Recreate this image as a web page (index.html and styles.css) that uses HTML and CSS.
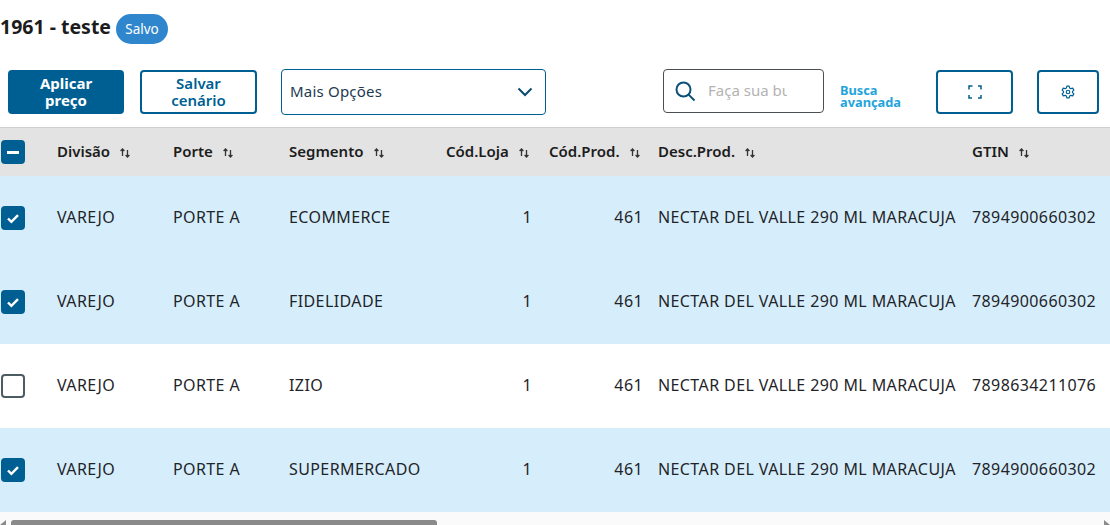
FILE: index.html
```html
<!DOCTYPE html>
<html lang="pt-BR">
<head>
<meta charset="utf-8">
<title>1961 - teste</title>
<link rel="stylesheet" href="styles.css">
</head>
<body>
<svg class="defs" width="0" height="0">
  <symbol id="sort" viewBox="0 0 12 12">
    <path d="M3.500 9V2.200M1.600 4 3.500 2l1.900 2" fill="none" stroke="currentColor" stroke-width="1.300"/>
    <path d="M8.500 3v6.800M6.600 8l1.900 2 1.900-2" fill="none" stroke="currentColor" stroke-width="1.300"/>
  </symbol>
  <symbol id="check" viewBox="0 0 24 24">
    <path d="M7 12.500l3.400 3.400L17 9.200" fill="none" stroke="#fff" stroke-width="2.400"/>
  </symbol>
</svg>
<header class="title-row">
  <h1 class="title">1961 - teste</h1>
  <span class="badge">Salvo</span>
</header>
<section class="toolbar">
  <button class="btn btn-primary">Aplicar<br>preço</button>
  <button class="btn btn-outline btn-save">Salvar<br>cenário</button>
  <div class="select">
    <span>Mais Opções</span>
    <svg width="16" height="10" viewBox="0 0 16 10"><path d="M1.500 1.500 8 8l6.500-6.500" fill="none" stroke="#0c4a6e" stroke-width="2"/></svg>
  </div>
  <div class="search">
    <svg width="22" height="22" viewBox="0 0 22 22"><circle cx="9.500" cy="9.500" r="7" fill="none" stroke="#0c4f78" stroke-width="2"/><path d="M14.600 14.600 20.500 20.500" stroke="#0c4f78" stroke-width="2"/></svg>
    <span class="placeholder">Faça sua busca</span>
  </div>
  <a class="advanced">Busca<br>avançada</a>
  <button class="btn btn-outline btn-icon btn-full">
    <svg width="14" height="14" viewBox="0 0 14 14"><path d="M1 4.500V1h3.500M10 1h3v3.500M13 10v3h-3M4 13H1v-3" fill="none" stroke="#005f92" stroke-width="1.500"/></svg>
  </button>
  <button class="btn btn-outline btn-icon btn-gear">
    <svg width="14" height="14" viewBox="0 0 24 24"><path d="M10 2h4l.7 3 2.300 1.300 3-.9 2 3.400-2.300 2.200v2l2.300 2.200-2 3.400-3-.9-2.300 1.300-.7 3h-4l-.7-3L7 17.700l-3 .9-2-3.400L4.300 13v-2L2 8.800l2-3.400 3 .9L9.300 5z" fill="none" stroke="#005f92" stroke-width="2" stroke-linejoin="round"/><circle cx="12" cy="12" r="3" fill="none" stroke="#005f92" stroke-width="2"/></svg>
  </button>
</section>
<main class="table-wrap">
  <table class="grid">
    <colgroup>
      <col class="c-check"><col class="c-short"><col class="c-short"><col class="c-seg"><col class="c-loja"><col class="c-prod"><col class="c-desc"><col class="c-gtin">
    </colgroup>
    <thead>
      <tr>
        <th class="cell-check"><span class="box box-on"><i class="dash"></i></span></th>
        <th>Divisão<svg class="sort"><use href="#sort"/></svg></th>
        <th>Porte<svg class="sort"><use href="#sort"/></svg></th>
        <th>Segmento<svg class="sort"><use href="#sort"/></svg></th>
        <th>Cód.Loja<svg class="sort"><use href="#sort"/></svg></th>
        <th>Cód.Prod.<svg class="sort"><use href="#sort"/></svg></th>
        <th>Desc.Prod.<svg class="sort"><use href="#sort"/></svg></th>
        <th>GTIN<svg class="sort"><use href="#sort"/></svg></th>
      </tr>
    </thead>
    <tbody>
      <tr class="selected">
        <td class="cell-check"><span class="box box-on"><svg width="24" height="24"><use href="#check"/></svg></span></td>
        <td>VAREJO</td><td>PORTE A</td><td>ECOMMERCE</td><td class="num loja">1</td><td class="num">461</td><td>NECTAR DEL VALLE 290 ML MARACUJA</td><td>7894900660302</td>
      </tr>
      <tr class="selected">
        <td class="cell-check"><span class="box box-on"><svg width="24" height="24"><use href="#check"/></svg></span></td>
        <td>VAREJO</td><td>PORTE A</td><td>FIDELIDADE</td><td class="num loja">1</td><td class="num">461</td><td>NECTAR DEL VALLE 290 ML MARACUJA</td><td>7894900660302</td>
      </tr>
      <tr>
        <td class="cell-check"><span class="box"></span></td>
        <td>VAREJO</td><td>PORTE A</td><td>IZIO</td><td class="num loja">1</td><td class="num">461</td><td>NECTAR DEL VALLE 290 ML MARACUJA</td><td>7898634211076</td>
      </tr>
      <tr class="selected">
        <td class="cell-check"><span class="box box-on"><svg width="24" height="24"><use href="#check"/></svg></span></td>
        <td>VAREJO</td><td>PORTE A</td><td>SUPERMERCADO</td><td class="num loja">1</td><td class="num">461</td><td>NECTAR DEL VALLE 290 ML MARACUJA</td><td>7894900660302</td>
      </tr>
    </tbody>
  </table>
</main>
<div class="scrollbar"><span class="arrow-left"></span><span class="thumb"></span><span class="arrow-right"></span></div>
</body>
</html>
```

FILE: styles.css
```css
* { box-sizing: border-box; }
html, body { margin: 0; height: 525px; overflow: hidden; }
body {
  width: 1110px;
  background: #fff;
  color: #1c1c1c;
  font-family: "Noto Sans", "Open Sans", sans-serif;
  display: flex;
  flex-direction: column;
}
.defs { position: absolute; }
.title-row {
  height: 69px;
  padding-top: 14px;
  display: flex;
  align-items: flex-start;
  gap: 5px;
}
.title {
  margin: 0;
  font-size: 19.5px;
  line-height: 25px;
  font-weight: 700;
  color: #1c1c1c;
}
.badge {
  width: 52px;
  height: 30px;
  border-radius: 15px;
  background: #2f86cc;
  color: #fff;
  font-size: 13.5px;
  padding-bottom: 1px;
  display: flex;
  align-items: center;
  justify-content: center;
}
.toolbar {
  height: 58px;
  display: flex;
  align-items: flex-start;
  padding-left: 8px;
}
.btn {
  height: 44px;
  margin-top: 1px;
  border-radius: 4px;
  font-family: inherit;
  font-size: 15px;
  font-weight: 700;
  line-height: 17px;
  padding: 0;
  display: flex;
  align-items: center;
  justify-content: center;
  text-align: center;
}
.btn-primary { width: 116px; background: #005f92; border: 0; color: #fff; }
.btn-outline { background: #fff; border: 2px solid #005f92; color: #005f92; }
.btn-save { width: 117px; margin-left: 16px; font-weight: 600; }
.select {
  width: 265px;
  height: 46px;
  margin-left: 24px;
  border: 1px solid #005f92;
  border-radius: 4px;
  padding: 0 12px 3px 8px;
  display: flex;
  align-items: center;
  justify-content: space-between;
  font-size: 15px;
  letter-spacing: 0.2px;
  color: #1e3a50;
}
.select svg { margin-top: 3px; }
.search {
  width: 161px;
  height: 44px;
  margin-left: 117px;
  border: 1px solid #4a4f54;
  border-radius: 4px;
  padding-left: 10px;
  display: flex;
  align-items: center;
  overflow: hidden;
}
.placeholder {
  width: 79px;
  margin-left: 12px;
  margin-top: -3px;
  font-size: 15px;
  color: #b3b3b3;
  white-space: nowrap;
  overflow: hidden;
}
.advanced {
  width: 96px;
  margin-left: 16px;
  margin-top: 15px;
  font-size: 12.8px;
  font-weight: 700;
  line-height: 12px;
  color: #1fa4dc;
}
.btn-icon { height: 44px; }
.btn-full { width: 77px; }
.btn-gear { width: 62px; margin-left: 24px; }
.table-wrap {
  height: 385px;
  overflow: hidden;
  border-top: 1px solid #cfcfcf;
}
.grid {
  width: 1142px;
  table-layout: fixed;
  border-collapse: collapse;
  font-size: 16px;
  letter-spacing: 0.4px;
}
.c-check { width: 57px; }
.c-short { width: 116px; }
.c-seg { width: 157px; }
.c-loja { width: 103px; }
.c-prod { width: 109px; }
.c-desc { width: 314px; }
.c-gtin { width: 170px; }
th {
  height: 48px;
  background: #e3e3e3;
  text-align: left;
  padding: 0 0 3px;
  font-size: 15px;
  font-weight: 600;
  letter-spacing: 0;
  color: #1c1c1c;
  white-space: nowrap;
}
td {
  height: 84px;
  padding: 0 0 3px;
  white-space: nowrap;
  color: #1f2429;
}
th.cell-check, td.cell-check { padding: 0; }
.selected td { background: #d6eefb; }
.num { text-align: right; padding-right: 15px; }
.loja { padding-right: 17px; }
.sort { width: 12px; height: 12px; margin-left: 9px; vertical-align: -2px; color: #333; }
.box {
  display: flex;
  align-items: center;
  justify-content: center;
  width: 24px;
  height: 24px;
  margin-left: 1px;
  border: 2px solid #4d5b63;
  border-radius: 4px;
  background: #fff;
}
.box-on { border: 0; background: #005f92; }
.dash { display: block; width: 12px; height: 3px; background: #fff; }
.scrollbar {
  height: 13px;
  padding-top: 8px;
  background: #fafafa;
  display: flex;
  align-items: flex-end;
}
.thumb {
  display: block;
  width: 426px;
  height: 5px;
  margin-left: 5px;
  background: #8a8a8a;
  border-radius: 3px 3px 0 0;
}
.arrow-left { width: 6px; height: 5px; background: #8a8a8a; clip-path: polygon(100% 0, 100% 100%, 0 100%); }
.arrow-right { width: 6px; height: 5px; background: #8a8a8a; clip-path: polygon(0 0, 100% 100%, 0 100%); margin-left: auto; }
```
